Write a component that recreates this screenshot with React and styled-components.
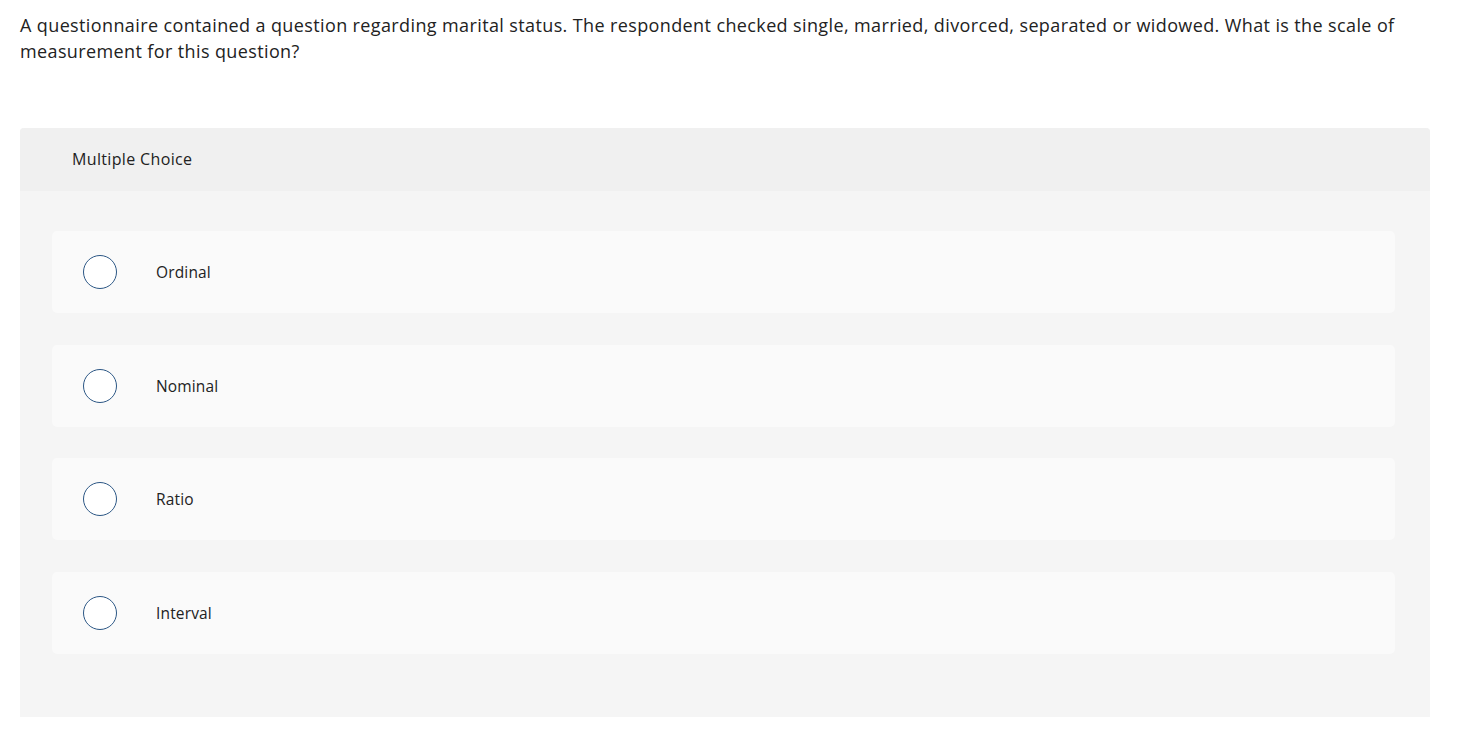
import React from "react";
import styled, { createGlobalStyle } from "styled-components";

const GlobalStyle = createGlobalStyle`
  body {
    margin: 0;
    background: #ffffff;
    font-family: "Open Sans", Lato, Arial, sans-serif;
    color: #222222;
  }
`;

const options = ["Ordinal", "Nominal", "Ratio", "Interval"];

const App = () => {
  return (
    <>
      <GlobalStyle />
      <Page>
        <Question>
          A questionnaire contained a question regarding marital status. The respondent checked single, married,
          divorced, separated or widowed. What is the scale of measurement for this question?
        </Question>
        <Panel>
          <PanelHeader>Multiple Choice</PanelHeader>
          <OptionList>
            {options.map((o) => (
              <Option key={o}>
                <Radio />
                <OptionLabel>{o}</OptionLabel>
              </Option>
            ))}
          </OptionList>
        </Panel>
      </Page>
    </>
  );
};

export default App;

// 페이지 전체
const Page = styled.div`
  padding: 12px 31px 22px 20px;
`;

// 질문 텍스트
const Question = styled.p`
  margin: 0;
  font-size: 18px;
  letter-spacing: 0.38px;
  line-height: 26px;
  color: #222;
`;

// 선택지 패널
const Panel = styled.div`
  margin-top: 64px;
  background-color: #f5f5f5;
  border-radius: 4px 4px 0 0;
  overflow: hidden;
`;

const PanelHeader = styled.div`
  background-color: #f0f0f0;
  height: 63px;
  display: flex;
  align-items: center;
  padding-left: 52px;
  padding-bottom: 2px;
  box-sizing: border-box;
  font-size: 16px;
  letter-spacing: 0.35px;
  color: #222;
`;

const OptionList = styled.div`
  display: flex;
  flex-direction: column;
  gap: 31.5px;
  padding: 40px 35px 63px 32px;
`;

const Option = styled.div`
  display: flex;
  align-items: center;
  height: 82px;
  background-color: #fafafa;
  border-radius: 5px;
  padding-left: 31px;
`;

const Radio = styled.span`
  width: 34px;
  height: 34px;
  box-sizing: border-box;
  border-radius: 50%;
  border: 1.5px solid #2c5785;
  background-color: #fff;
  flex-shrink: 0;
`;

const OptionLabel = styled.span`
  margin-left: 39px;
  font-size: 15.5px;
  letter-spacing: 0.15px;
  color: #222;
`;
